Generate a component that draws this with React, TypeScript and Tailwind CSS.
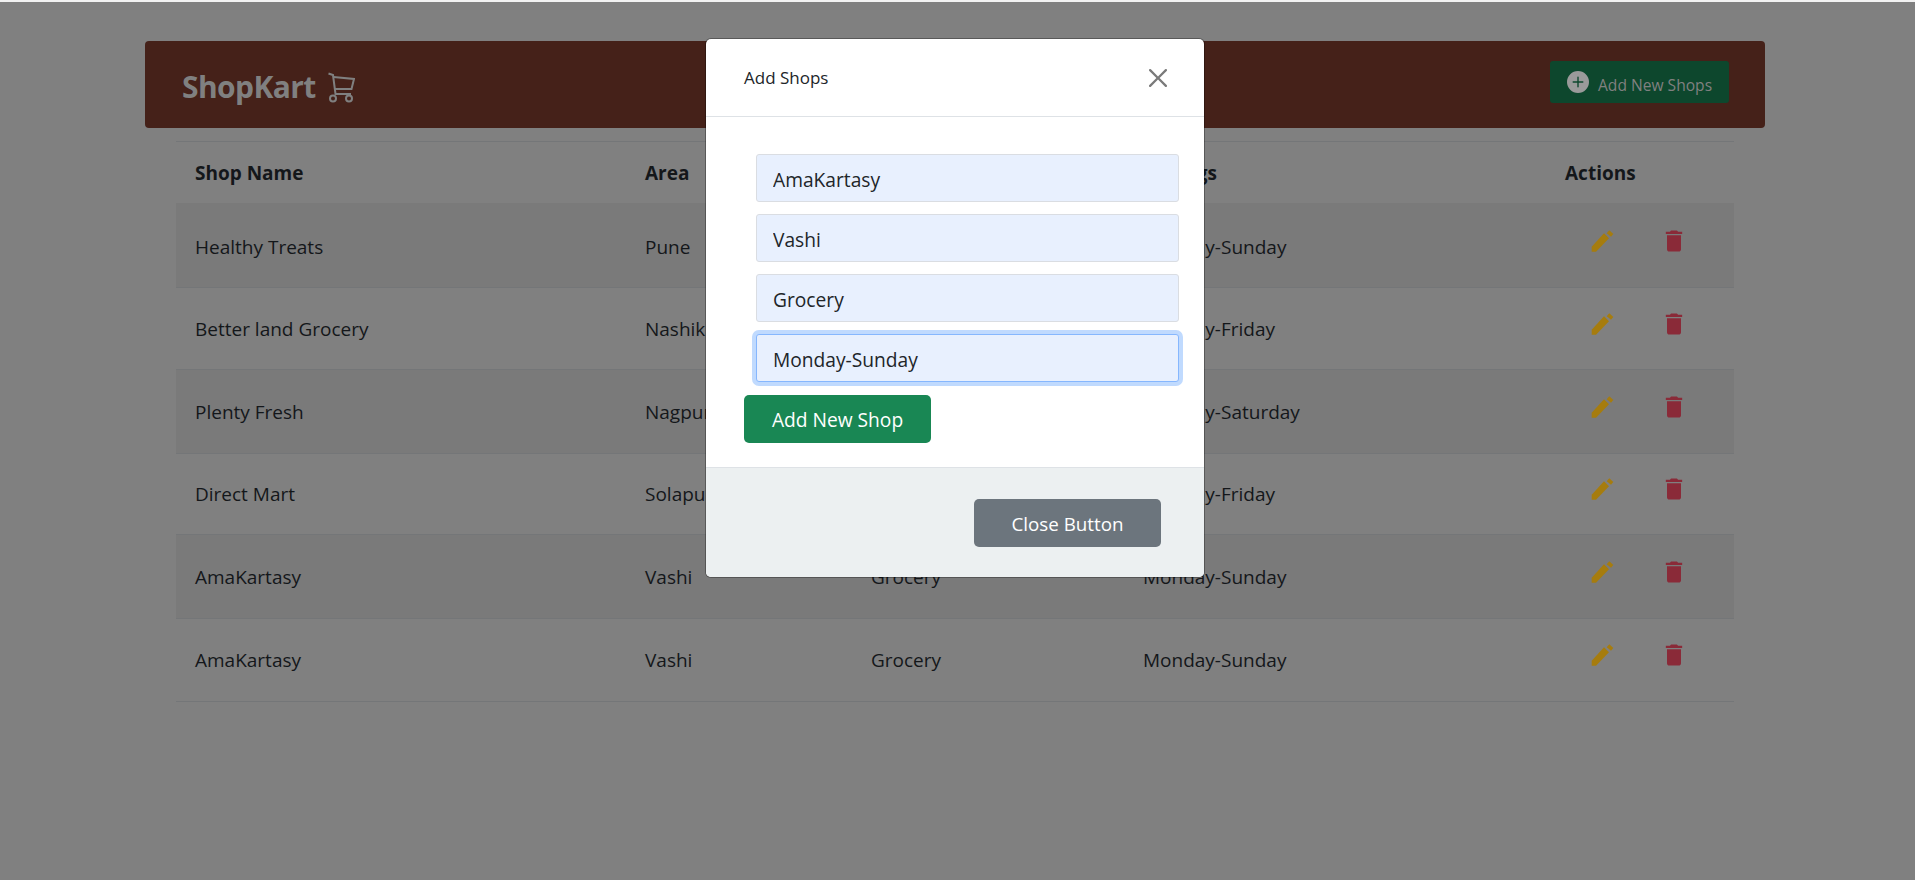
import React from "react";
import { MdDelete } from "react-icons/md";

const rows = [
  ["Healthy Treats", "Pune", "Grocery", "Monday-Sunday"],
  ["Better land Grocery", "Nashik", "Grocery", "Monday-Friday"],
  ["Plenty Fresh", "Nagpur", "Grocery", "Monday-Saturday"],
  ["Direct Mart", "Solapur", "Grocery", "Monday-Friday"],
  ["AmaKartasy", "Vashi", "Grocery", "Monday-Sunday"],
  ["AmaKartasy", "Vashi", "Grocery", "Monday-Sunday"],
];
const heights = ["h-[85px]", "h-[82px]", "h-[84px]", "h-[81px]", "h-[84px]", "h-[83px]"];
const pads = ["pt-[4px]", "pt-[2px]", "pt-[2px]", "pt-[1px]", "pt-[2px]", "pt-[1px]"];
const fields = ["AmaKartasy", "Vashi", "Grocery"];

function Cart() {
  return (
    <svg width="27" height="31" viewBox="0 0 27 31" fill="none" stroke="currentColor" strokeWidth="2">
      <path d="M0.5 1.5 L5 3 L7.5 22 H23" />
      <path d="M5.5 5 L26 7 L23.5 17 H7" />
      <circle cx="5" cy="26.5" r="3" />
      <circle cx="21" cy="26.5" r="3" />
    </svg>
  );
}

function Pencil() {
  return (
    <svg width="23" height="22" viewBox="0 0 23 22" fill="#a67c0e">
      <path d="M0.7 16.7 L13 3.2 L18 8.3 L5 21.7 H0.7 Z" />
      <path d="M15.7 3.3 L18.3 0.3 L22.3 4 L20 6.7 Z" />
    </svg>
  );
}

export default function App() {
  return (
    <div className="relative h-[880px] w-[1915px] overflow-hidden bg-[#808080] font-['Open_Sans',sans-serif] text-[#111315]">
      <div className="h-[2px] bg-[#f2f2f2]" />
      <div className="pl-[145px] pt-[39px]">
        <header className="flex h-[87px] w-[1620px] items-center justify-between rounded-[4px] bg-[#452119] pl-[37px] pr-[36px]">
          <div className="mt-[5px] flex items-center gap-[12px] text-[#808080]">
            <span className="text-[30px] font-bold leading-none tracking-[-0.6px]">ShopKart</span>
            <Cart />
          </div>
          <button className="mb-[5px] flex h-[42px] w-[179px] items-center gap-[9px] rounded-[3px] bg-[#0d472d] pl-[17px] text-[15.6px] text-[#808080]">
            <svg width="22" height="22" viewBox="0 0 16 16" fill="#9a9a9a" className="-mt-[1px]">
              <path d="M16 8A8 8 0 1 1 0 8a8 8 0 0 1 16 0zM8.5 4.5a.5.5 0 0 0-1 0v3h-3a.5.5 0 0 0 0 1h3v3a.5.5 0 0 0 1 0v-3h3a.5.5 0 0 0 0-1h-3v-3z" />
            </svg>
            <span className="mt-[7px]">Add New Shops</span>
          </button>
        </header>

        <table className="ml-[31px] mt-[13px] w-[1558px] table-fixed border-t border-[#747678] text-[19px] text-[#14171a]">
          <thead>
            <tr className="h-[61px] text-left font-bold">
              <th className="w-[469px] pl-[19px] pt-[2px] font-bold">Shop Name</th>
              <th className="w-[226px] pt-[2px] font-bold">Area</th>
              <th className="w-[272px] pt-[2px] font-bold">Category</th>
              <th className="w-[422px] pt-[2px] font-bold">Timings</th>
              <th className="pt-[2px] font-bold">Actions</th>
            </tr>
          </thead>
          <tbody>
            {rows.map((r, i) => (
              <tr key={i} className={`${heights[i]} border-b border-[#747678] ${i % 2 === 0 ? "bg-[#7a7a7a]" : ""}`}>
                <td className={`pl-[19px] ${pads[i]}`}>{r[0]}</td>
                <td className={pads[i]}>{r[1]}</td>
                <td className={pads[i]}>{r[2]}</td>
                <td className={pads[i]}>{r[3]}</td>
                <td className={pads[i]}>
                  <div className="-mt-[12px] flex items-center pl-[26px]">
                    <Pencil />
                    <MdDelete className="ml-[46px] h-[28px] w-[28px] text-[#8a2a38]" />
                  </div>
                </td>
              </tr>
            ))}
          </tbody>
        </table>
      </div>

      <div className="absolute left-[706px] top-[39px] w-[498px] overflow-hidden rounded-[5px] bg-white text-[#212529] shadow-[0_0_0_1px_rgba(0,0,0,0.3)]">
        <div className="flex h-[78px] items-center justify-between border-b border-[#dee2e6] pl-[38px] pr-[37px]">
          <span className="text-[17px]">Add Shops</span>
          <svg width="18" height="18" viewBox="0 0 16 16" fill="#7a7a7a">
            <path d="M.293.293a1 1 0 0 1 1.414 0L8 6.586 14.293.293a1 1 0 1 1 1.414 1.414L9.414 8l6.293 6.293a1 1 0 0 1-1.414 1.414L8 9.414l-6.293 6.293a1 1 0 0 1-1.414-1.414L6.586 8 .293 1.707a1 1 0 0 1 0-1.414z" />
          </svg>
        </div>
        <div className="h-[350px] pl-[38px] pt-[10px]">
          <div className="flex flex-col gap-[12px] pl-[12px] pt-[27px]">
            {fields.map((f) => (
              <input key={f} readOnly value={f} className="h-[48px] w-[423px] rounded-[3px] border border-[#dadde2] bg-[#e8f0fe] px-[16px] pt-[2px] text-[19.2px] outline-none" />
            ))}
            <input readOnly value="Monday-Sunday" className="h-[48px] w-[423px] rounded-[3px] border border-[#86b7fe] bg-[#e8f0fe] px-[16px] pt-[3px] text-[19.2px] shadow-[0_0_0_4px_#c0dafe] outline-none" />
          </div>
          <button className="mt-[13px] h-[48px] w-[187px] rounded-[5px] bg-[#198754] pt-[2px] text-[19.2px] text-white">Add New Shop</button>
        </div>
        <div className="flex h-[110px] justify-end border-t border-[#dee2e6] bg-[#ecf0f1] pr-[43px] pt-[31px]">
          <button className="h-[48px] w-[187px] rounded-[5px] bg-[#6c757d] pt-[2px] text-[18.8px] text-white">Close Button</button>
        </div>
      </div>
    </div>
  );
}
